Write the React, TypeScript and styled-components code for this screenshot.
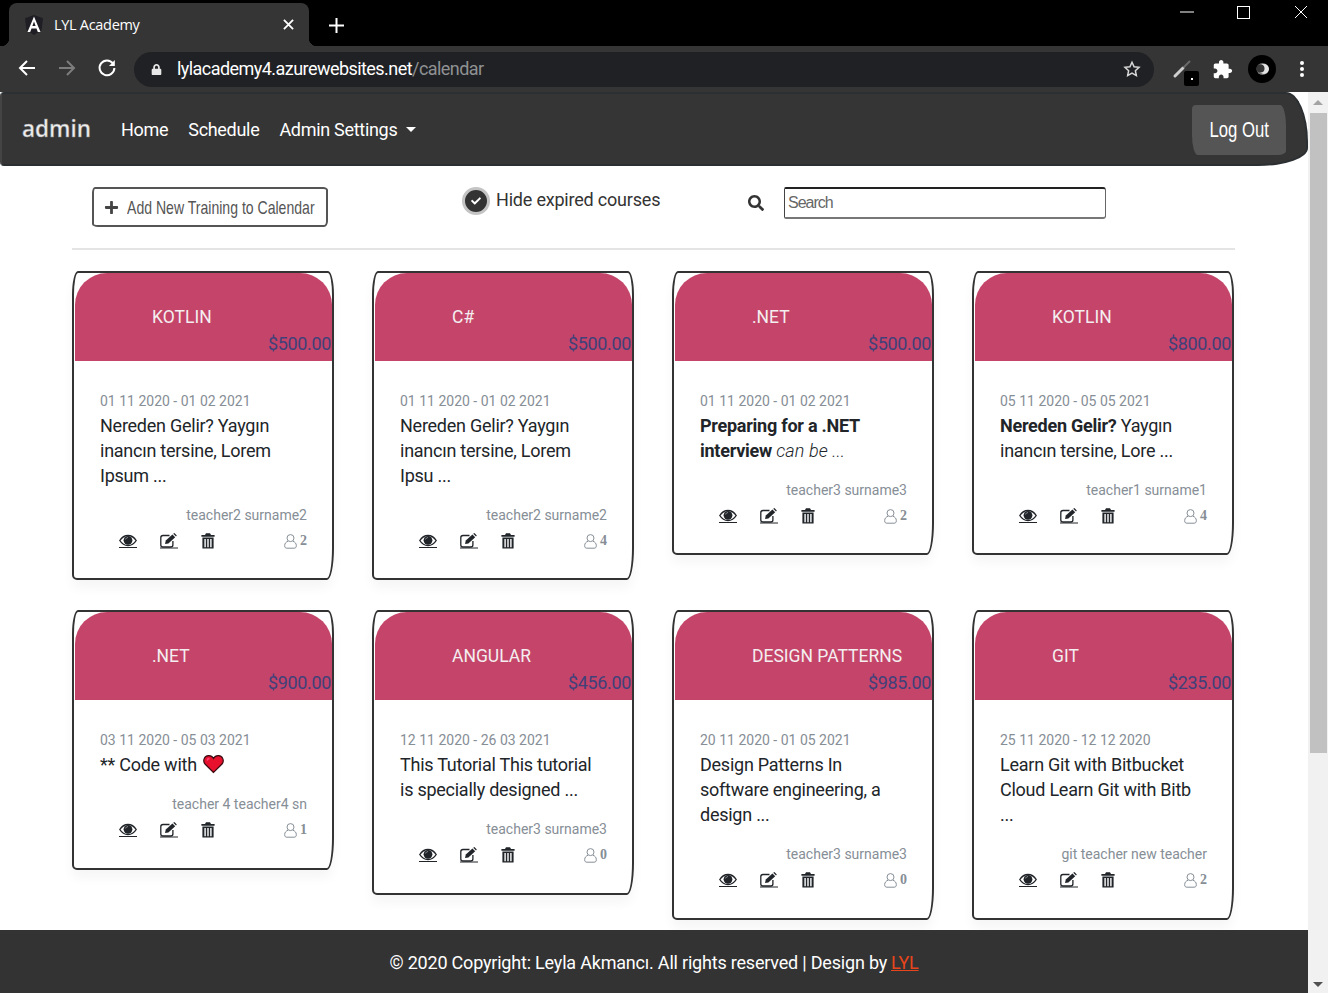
import React from "react";
import styled, { createGlobalStyle } from "styled-components";
import { FaLock, FaPlus, FaSearch, FaCheck } from "react-icons/fa";

const Global = createGlobalStyle`
  html, body { margin: 0; padding: 0; height: 993px; overflow: hidden; background: #fff; }
  * { box-sizing: border-box; }
  body { font-family: Roboto, "Liberation Sans", sans-serif; }
`;

const Shell = styled.div`width: 1328px; height: 993px; display: flex; flex-direction: column; overflow: hidden;`;

const TabStrip = styled.div`height: 46px; background: #000; display: flex; padding: 3px 0 0 9px; position: relative;`;
const Tab = styled.div`
  width: 300px; height: 43px; background: #353535; border-radius: 8px 8px 0 0; display: flex; align-items: center;
  padding: 0 15px 0 15px; color: #fff; position: relative;
  &::before, &::after { content: ""; position: absolute; bottom: 0; width: 8px; height: 8px; }
  &::before { left: -8px; background: radial-gradient(circle at 0 0, #000 8px, #353535 8.5px); }
  &::after { right: -8px; background: radial-gradient(circle at 100% 0, #000 8px, #353535 8.5px); }
`;
const TabTitle = styled.span`flex: 1; margin-left: 10px; font: 14.5px "Open Sans", sans-serif; letter-spacing: -0.3px;`;
const NewTab = styled.div`margin: 15px 0 0 20px; width: 18px; height: 18px; display: flex;`;
const WindowButtons = styled.div`position: absolute; right: -1px; top: 0; display: flex; align-items: flex-start;`;
const WinBtn = styled.div`width: 57px; height: 24px; display: flex; align-items: center; justify-content: center;`;

const Toolbar = styled.div`height: 46px; background: #353535; display: flex; align-items: center; padding: 0 0 2px 17px;`;
const NavIcon = styled.div`width: 20px; height: 20px; display: flex; margin-right: 20px;`;
const Omnibox = styled.div`
  margin-left: -3px; width: 1020px; height: 35px; border-radius: 18px; background: #202124; display: flex; align-items: center;
  padding: 0 13px 0 17px; color: #fff; flex: none; margin-top: 2px;
`;
const Url = styled.div`flex: 1; margin-left: 15px; font: 18px Roboto, sans-serif; letter-spacing: -0.55px; color: #fff; margin-top: -2px; span { color: #8f9193; }`;
const ToolBox = styled.div<{ $ml: number }>`width: 28px; height: 28px; margin-left: ${p => p.$ml}px; margin-top: 2px; display: flex; align-items: center; justify-content: center; position: relative; flex: none;`;
const Badge = styled.div`position: absolute; right: 1px; bottom: -3px; width: 15px; height: 15px; background: #000; border-radius: 2px; display: flex; align-items: center; justify-content: center; &::after { content: ""; width: 2px; height: 2px; background: #fff; }`;

const Viewport = styled.div`flex: 1; display: flex; min-height: 0; background: #fff;`;
const Page = styled.div`flex: 1; min-width: 0; display: flex; flex-direction: column; overflow: hidden;`;

const Navbar = styled.nav`
  height: 74px; flex: none; background: #353535; border: 2px solid #2b2f31; border-left-color: #444;
  border-radius: 4px 22px 50px 4px / 4px 50px 18px 4px;
  display: flex; align-items: center; padding: 0 20px 0 20px;
`;
const Brand = styled.div`width: 68px; font: 600 22.5px "Open Sans", sans-serif; color: #eeeeee; margin-right: 31px; -webkit-text-stroke: 0.4px #888; line-height: 1;`;
const NavLink = styled.a`font: 18px Roboto, sans-serif; letter-spacing: -0.3px; color: #fff; margin-right: 20px; display: flex; align-items: center;`;
const Caret = styled.i`margin-left: 9px; width: 0; height: 0; border-left: 5.5px solid transparent; border-right: 5.5px solid transparent; border-top: 5.5px solid #fff;`;
const Spacer = styled.div`flex: 1;`;
const LogOut = styled.button`
  width: 94px; height: 50px; margin-top: 1px; background: #555; color: #fff; border: none;
  border-radius: 4px 6px 8px 6px / 4px 20px 4px 20px; display: flex; align-items: center; justify-content: center; padding: 0;
`;
const Narrow = styled.span<{ $size: number; $k: number }>`
  display: inline-block; white-space: nowrap; font: ${p => p.$size}px "Liberation Sans", sans-serif; transform: scaleX(${p => p.$k});
`;

const Container = styled.div`margin: 0 0 0 72px; width: 1163px;`;
const Controls = styled.div`display: flex; align-items: flex-start; height: 84px; padding-top: 21px; border-bottom: 2px solid #e4e4e4;`;
const AddBtn = styled.button`
  margin-left: 20px; width: 236px; height: 40px; background: #fff; border: 2px solid #555;
  border-radius: 3px 5px 4px 6px / 6px 3px 6px 3px;
  display: flex; align-items: center; padding: 0 0 0 10px; color: #555; position: relative; overflow: hidden;
  svg { flex: none; }
  span { transform-origin: left center; margin-left: 8px; padding-top: 1px; }
`;
const CheckRow = styled.label`margin-left: 134px; display: flex; align-items: flex-start; width: 198px;`;
const CheckRing = styled.span`width: 28px; height: 28px; margin-top: 0; flex: none; border-radius: 50%; background: #333; border: 3px solid #c4c4c4; display: flex; align-items: center; justify-content: center; color: #fff;`;
const CheckText = styled.span`margin-left: 6px; white-space: nowrap; letter-spacing: -0.2px; font: 18px/24px Roboto, sans-serif; color: #333; padding-top: 1px;`;
const SearchWrap = styled.div`margin-left: 88px; display: flex; align-items: flex-start; color: #333;`;
const SearchIcon = styled.span`width: 36px; padding-top: 8px; display: flex;`;
const SearchInput = styled.input`
  width: 322px; height: 32px; border-style: solid; border-width: 2px 1.5px 2px 1px; border-color: #222 #666 #777 #444;
  border-radius: 2px 3px 3px 2px; padding: 0 3px; font: 16px "Liberation Sans", sans-serif; letter-spacing: -1px; outline: none; color: #333;
  &::placeholder { color: #666; opacity: 1; }
`;

const Grid = styled.div`display: grid; grid-template-columns: repeat(4, 262px); column-gap: 38px; row-gap: 30px; align-items: start; margin-top: 21px;`;
const Card = styled.article`
  border: 2px solid #333; background: #fff; box-shadow: 0 8px 12px rgba(0,0,0,0.04);
  border-radius: 6px 6px 7px 5px / 24px 24px 32px 5px;
`;
const CardHead = styled.header`
  height: 88px; margin-left: 1px; background: #c44569; border-radius: 32px 32px 0 0; padding: 31.6px 0 0 77px; color: #f4eef0;
  position: relative; font: 17.5px/24px Roboto, sans-serif; white-space: nowrap;
`;
const Price = styled.div`position: absolute; right: 1px; bottom: 6px; font: 18px/22px Roboto, sans-serif; letter-spacing: -0.35px; color: #40407a;`;
const CardBody = styled.div`padding: 30.6px 25px 25.8px 26px;`;
const DateLine = styled.div`font: 14px/18px Roboto, sans-serif; color: #868e96;`;
const Desc = styled.div`margin-top: 3.4px; font: 18px/25px Roboto, sans-serif; letter-spacing: -0.25px; color: #212529; b { font-weight: 700; } em { font-weight: 300; letter-spacing: 0.1px; }`;
const Teacher = styled.div`margin-top: 17.6px; text-align: right; font: 14px/18px Roboto, sans-serif; color: #868e96;`;
const Actions = styled.div`display: flex; align-items: center; height: 22px; margin-top: 7px; padding-left: 19px; color: #212529;`;
const ActionLink = styled.a<{ $w: number }>`width: ${p => p.$w}px; height: 22px; padding-top: 2.5px; display: flex; align-items: flex-start; svg { display: block; }`;
const Count = styled.div`margin-left: auto; margin-top: -1px; display: flex; align-items: center; color: #868e96; font: 700 14px "Liberation Serif", serif;`;
const Foot = styled.footer`margin-top: 10px; flex: 1; background: #333; color: #fff; display: flex; align-items: center; justify-content: center; padding-top: 2px; font: 18px Roboto, sans-serif; letter-spacing: -0.2px; a { color: #e8451c; text-decoration: underline; margin-left: 4px; }`;

const Scrollbar = styled.aside`width: 20px; flex: none; background: #f1f1f1; display: flex; flex-direction: column; align-items: center; position: relative;`;
const Thumb = styled.div`width: 17px; height: 640px; background: #c1c1c1; margin-top: 21px;`;
const Arrow = styled.i<{ $down?: boolean; $c: string }>`
  position: absolute; ${p => p.$down ? "bottom: 6px;" : "top: 8px;"} width: 0; height: 0;
  border-left: 5px solid transparent; border-right: 5px solid transparent;
  ${p => p.$down ? `border-top: 5px solid ${p.$c};` : `border-bottom: 5px solid ${p.$c};`}
`;

const HeartIcon = () => (
  <svg width="21" height="20" viewBox="0 0 21 19" style={{ verticalAlign: "-3px", marginLeft: 2 }}>
    <path d="M10.5 18 L2 9.5 C-0.5 6.5 1 1.5 5.5 1.2 C8 1 9.6 2.4 10.5 4 C11.4 2.4 13 1 15.5 1.2 C20 1.5 21.5 6.5 19 9.5 Z" fill="#e8112d" stroke="#3a0a10" strokeWidth="1.2" />
    <path d="M4 6 C4.5 4.5 5.5 4 6.5 4" stroke="#f47" strokeWidth="1.4" fill="none" />
  </svg>
);

const EyeGlyph = () => (
  <svg width="18" height="16" viewBox="0 0 18 16" fill="none">
    <path d="M0.8 7.5 C3 4 6 2.5 9 2.5 C12 2.5 15 4 17.2 7.5 C15 11 12 12.5 9 12.5 C6 12.5 3 11 0.8 7.5 Z" stroke="#212529" strokeWidth="1.4" />
    <circle cx="9" cy="7.3" r="4.4" fill="#212529" />
    <path d="M6.6 6.4 C7 5.2 8 4.6 9 4.6" stroke="#999" strokeWidth="1" />
    <path d="M0 14.5 H18" stroke="#212529" strokeWidth="1" />
  </svg>
);

const EditGlyph = () => (
  <svg width="18" height="16" viewBox="0 0 18 16" fill="none">
    <path d="M9.5 2.5 H3 C1.6 2.5 0.8 3.3 0.8 4.7 V12 C0.8 13.4 1.6 14 3 14 H10.6 C12 14 12.9 13.3 12.9 12 V8" stroke="#212529" strokeWidth="1.3" />
    <path d="M5 11 L5.8 7.6 L12.4 1.4 L15.2 4.2 L8.4 10.4 Z" fill="#212529" />
    <path d="M13.2 0.7 L14.4 0 L16.8 2.4 L16 3.5 Z" fill="#212529" />
    <path d="M0 15 H18" stroke="#212529" strokeWidth="1" />
  </svg>
);

const TrashGlyph = () => (
  <svg width="14" height="16" viewBox="0 0 14 16" fill="#212529">
    <path d="M5 0.2 H9 L10 2 H13.6 V3.8 H0.4 V2 H4 Z" />
    <path d="M1.4 4.6 H12.6 V15.6 H1.4 Z M3.4 6 V14.2 H4.8 V6 Z M6.3 6 V14.2 H7.7 V6 Z M9.2 6 V14.2 H10.6 V6 Z" fillRule="evenodd" />
  </svg>
);

const UserGlyph = () => (
  <svg width="13" height="15" viewBox="0 0 13 15" fill="none" stroke="#868e96" strokeWidth="1" style={{ marginRight: 3 }}>
    <circle cx="6.5" cy="4.1" r="3.5" />
    <path d="M4 7.3 C2 7.9 0.7 9.5 0.7 11.4 V12 C0.7 13.4 1.5 14.2 2.9 14.2 H10.1 C11.5 14.2 12.3 13.4 12.3 12 V11.4 C12.3 9.5 11 7.9 9 7.3" />
  </svg>
);

type Course = { title: string; price: string; dates: string; desc: React.ReactNode; teacher: string; count: number };

const courses: Course[] = [
  { title: "KOTLIN", price: "$500.00", dates: "01 11 2020 - 01 02 2021", desc: "Nereden Gelir? Yaygın inancın tersine, Lorem Ipsum ...", teacher: "teacher2 surname2", count: 2 },
  { title: "C#", price: "$500.00", dates: "01 11 2020 - 01 02 2021", desc: "Nereden Gelir? Yaygın inancın tersine, Lorem Ipsu ...", teacher: "teacher2 surname2", count: 4 },
  { title: ".NET", price: "$500.00", dates: "01 11 2020 - 01 02 2021", desc: <><b>Preparing for a .NET interview</b> <em>can be ...</em></>, teacher: "teacher3 surname3", count: 2 },
  { title: "KOTLIN", price: "$800.00", dates: "05 11 2020 - 05 05 2021", desc: <><b>Nereden Gelir?</b> Yaygın inancın tersine, Lore ...</>, teacher: "teacher1 surname1", count: 4 },
  { title: ".NET", price: "$900.00", dates: "03 11 2020 - 05 03 2021", desc: <>** Code with <HeartIcon /></>, teacher: "teacher 4 teacher4 sn", count: 1 },
  { title: "ANGULAR", price: "$456.00", dates: "12 11 2020 - 26 03 2021", desc: "This Tutorial This tutorial is specially designed ...", teacher: "teacher3 surname3", count: 0 },
  { title: "DESIGN PATTERNS", price: "$985.00", dates: "20 11 2020 - 01 05 2021", desc: "Design Patterns In software engineering, a design ...", teacher: "teacher3 surname3", count: 0 },
  { title: "GIT", price: "$235.00", dates: "25 11 2020 - 12 12 2020", desc: "Learn Git with Bitbucket Cloud Learn Git with Bitb ...", teacher: "git teacher new teacher", count: 2 },
];

export default function App() {
  return (
    <Shell>
      <Global />
      <TabStrip>
        <Tab>
          <svg width="20" height="20" viewBox="0 0 20 20">
            <path d="M10 0 L19 3.2 L17.6 15.2 L10 20 L2.4 15.2 L1 3.2 Z" fill="#1e1e24" />
            <path d="M10 1.5 L16.5 17 H13.8 L12.5 13.5 H7.5 L6.2 17 H3.5 Z M10 6.5 L8.4 11 H11.6 Z" fill="#fff" fillRule="evenodd" />
          </svg>
          <TabTitle>LYL Academy</TabTitle>
          <svg width="11" height="11" viewBox="0 0 12 12" stroke="#fff" strokeWidth="2"><path d="M1 1 L11 11 M11 1 L1 11" /></svg>
        </Tab>
        <NewTab>
          <svg width="15" height="15" viewBox="0 0 15 15" stroke="#fff" strokeWidth="2"><path d="M7.5 0 V15 M0 7.5 H15" /></svg>
        </NewTab>
        <WindowButtons>
          <WinBtn><svg width="14" height="2" viewBox="0 0 14 2" stroke="#fff"><path d="M0 1 H14" /></svg></WinBtn>
          <WinBtn><svg width="13" height="13" viewBox="0 0 13 13" fill="none" stroke="#fff"><rect x="0.5" y="0.5" width="12" height="12" /></svg></WinBtn>
          <WinBtn><svg width="14" height="14" viewBox="0 0 14 14" stroke="#fff"><path d="M1 1 L13 13 M13 1 L1 13" /></svg></WinBtn>
        </WindowButtons>
      </TabStrip>
      <Toolbar>
        <NavIcon><svg width="20" height="20" viewBox="0 0 20 20" fill="none" stroke="#fff" strokeWidth="2"><path d="M18 10 H3 M10 3 L3 10 L10 17" /></svg></NavIcon>
        <NavIcon><svg width="20" height="20" viewBox="0 0 20 20" fill="none" stroke="#7d7d7d" strokeWidth="2"><path d="M2 10 H17 M10 3 L17 10 L10 17" /></svg></NavIcon>
        <NavIcon><svg width="20" height="20" viewBox="0 0 20 20" fill="none" stroke="#fff" strokeWidth="2"><path d="M16 5.5 A7.4 7.4 0 1 0 17.4 10" /><path d="M17.8 2 V8 H12 Z" fill="#fff" stroke="none" /></svg></NavIcon>
        <Omnibox>
          <FaLock size={11} color="#e8e8e8" />
          <Url>lylacademy4.azurewebsites.net<span>/calendar</span></Url>
          <svg width="18" height="18" viewBox="0 0 24 24" fill="none" stroke="#d8d8d8" strokeWidth="2"><path d="M12 3 L14.8 9 L21.4 9.8 L16.5 14.3 L17.8 20.8 L12 17.5 L6.2 20.8 L7.5 14.3 L2.6 9.8 L9.2 9 Z" /></svg>
        </Omnibox>
        <ToolBox $ml={18}>
          <svg width="28" height="28" viewBox="0 0 28 28" fill="none"><path d="M3 21 L11 13" stroke="#cfcfcf" strokeWidth="3" strokeLinecap="round" /><path d="M11.5 12.5 L18 6" strokeWidth="2" stroke="#6a6a6a" /></svg>
          <Badge />
        </ToolBox>
        <ToolBox $ml={8}>
          <svg width="21" height="21" viewBox="0 0 24 24" fill="#fff"><path d="M20.5 11H19V7c0-1.1-.9-2-2-2h-4V3.5C13 2.12 11.88 1 10.5 1S8 2.12 8 3.5V5H4c-1.1 0-1.99.9-1.99 2v3.8H3.5c1.49 0 2.7 1.21 2.7 2.7s-1.21 2.7-2.7 2.7H2V20c0 1.1.9 2 2 2h3.8v-1.5c0-1.49 1.21-2.7 2.7-2.7 1.49 0 2.7 1.21 2.7 2.7V22H17c1.1 0 2-.9 2-2v-4h1.5c1.38 0 2.5-1.12 2.5-2.5S21.88 11 20.5 11z" /></svg>
        </ToolBox>
        <ToolBox $ml={12}>
          <svg width="28" height="28" viewBox="0 0 28 28"><circle cx="14" cy="14" r="14" fill="#000" /><circle cx="14.5" cy="14" r="6" fill="#777" /><circle cx="16" cy="14" r="5" fill="#e4e4e4" /><circle cx="12.5" cy="13.5" r="4" fill="#333" /></svg>
        </ToolBox>
        <ToolBox $ml={12}>
          <svg width="4" height="18" viewBox="0 0 4 18" fill="#fff"><circle cx="2" cy="3" r="2" /><circle cx="2" cy="9" r="2" /><circle cx="2" cy="15" r="2" /></svg>
        </ToolBox>
      </Toolbar>
      <Viewport>
        <Page>
          <Navbar>
            <Brand>admin</Brand>
            <NavLink>Home</NavLink>
            <NavLink>Schedule</NavLink>
            <NavLink>Admin Settings<Caret /></NavLink>
            <Spacer />
            <LogOut><Narrow $size={22} $k={0.76}>Log Out</Narrow></LogOut>
          </Navbar>
          <Container>
            <Controls>
              <AddBtn><FaPlus size={15} color="#444" /><Narrow $size={19} $k={0.74}>Add New Training to Calendar</Narrow></AddBtn>
              <CheckRow>
                <CheckRing><FaCheck size={10} /></CheckRing>
                <CheckText>Hide expired courses</CheckText>
              </CheckRow>
              <SearchWrap>
                <SearchIcon><FaSearch size={16} /></SearchIcon>
                <SearchInput placeholder="Search" />
              </SearchWrap>
            </Controls>
            <Grid>
              {courses.map((c, i) => (
                <Card key={i}>
                  <CardHead>
                    {c.title}
                    <Price>{c.price}</Price>
                  </CardHead>
                  <CardBody>
                    <DateLine>{c.dates}</DateLine>
                    <Desc>{c.desc}</Desc>
                    <Teacher>{c.teacher}</Teacher>
                    <Actions>
                      <ActionLink $w={41}><EyeGlyph /></ActionLink>
                      <ActionLink $w={41}><EditGlyph /></ActionLink>
                      <ActionLink $w={20}><TrashGlyph /></ActionLink>
                      <Count><UserGlyph />{c.count}</Count>
                    </Actions>
                  </CardBody>
                </Card>
              ))}
            </Grid>
          </Container>
          <Foot>© 2020 Copyright: Leyla Akmancı. All rights reserved | Design by <a>LYL</a></Foot>
        </Page>
        <Scrollbar>
          <Arrow $c="#a3a3a3" />
          <Thumb />
          <Arrow $down $c="#505050" />
        </Scrollbar>
      </Viewport>
    </Shell>
  );
}
